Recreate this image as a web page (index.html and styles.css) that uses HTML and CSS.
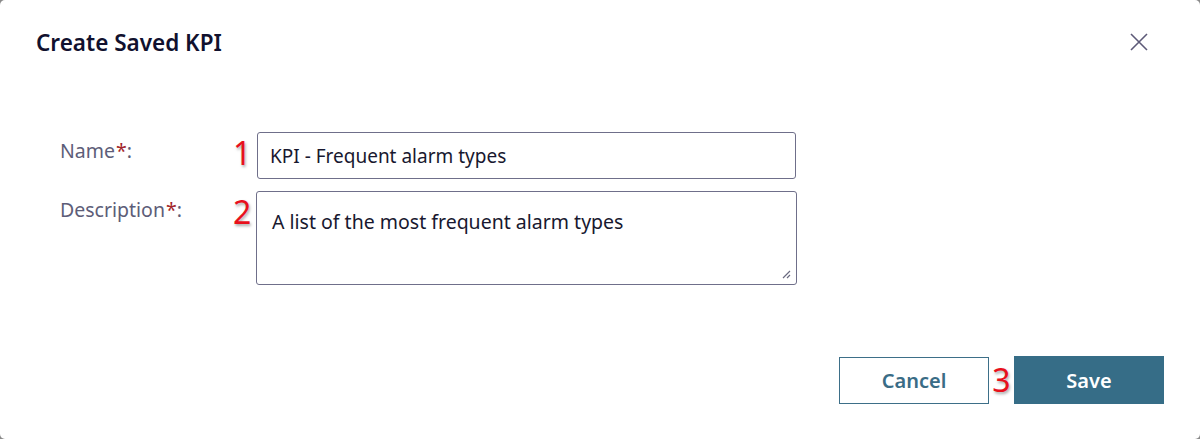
FILE: index.html
```html
<!DOCTYPE html>
<html lang="en">
<head>
<meta charset="utf-8">
<title>Create Saved KPI</title>
<link rel="stylesheet" href="styles.css">
</head>
<body>
<div class="dialog">
  <header class="dialog-header">
    <h1 class="dialog-title">Create Saved KPI</h1>
    <button class="close-btn" aria-label="Close">
      <svg width="20" height="20" viewBox="0 0 20 20"><path d="M2 2 L18 18 M18 2 L2 18" stroke="#5d5a78" stroke-width="1.6" fill="none"/></svg>
    </button>
  </header>
  <form class="form">
    <div class="row">
      <label class="label">Name<span class="req">*</span>:</label>
      <span class="marker">1</span>
      <div class="field input">KPI - Frequent alarm types</div>
    </div>
    <div class="row">
      <label class="label">Description<span class="req">*</span>:</label>
      <span class="marker">2</span>
      <div class="field textarea">A list of the most frequent alarm types
        <svg class="grip" width="10" height="10" viewBox="0 0 10 10"><path d="M9 2 L2 9 M9 6 L6 9" stroke="#6a6a80" stroke-width="1.2" fill="none"/></svg>
      </div>
    </div>
  </form>
  <footer class="actions">
    <button class="btn btn-cancel">Cancel</button>
    <span class="marker marker-btn">3</span>
    <button class="btn btn-save">Save</button>
  </footer>
</div>
</body>
</html>
```
FILE: styles.css
```css
html { background: #8a8a8a; }
body {
  margin: 0;
  font-family: "Noto Sans", "Segoe UI", sans-serif;
}
.dialog {
  width: 1200px;
  height: 439px;
  background: #fff;
  border-radius: 5px;
  box-sizing: border-box;
  padding: 26px 36px 0 36px;
  display: flex;
  flex-direction: column;
}
.dialog-header {
  display: flex;
  justify-content: space-between;
  align-items: center;
  height: 32px;
}
.dialog-title {
  margin: 0;
  font-size: 22.5px;
  font-weight: 600;
  color: #11112e;
}
.close-btn {
  border: 0;
  background: none;
  padding: 0;
  margin-right: 15px;
  width: 20px;
  height: 20px;
  display: flex;
}
.form {
  margin-top: 74px;
  display: flex;
  flex-direction: column;
  gap: 12px;
  padding-left: 24px;
}
.row {
  display: flex;
  align-items: flex-start;
}
.label {
  width: 173px;
  font-size: 19.5px;
  color: #5d5d78;
  padding-top: 6px;
  line-height: 26px;
}
.req { color: #a3262a; margin-left: 1px; }
.marker {
  color: #e8101c;
  font-size: 32px;
  line-height: 32px;
  width: 24px;
  text-shadow: 1px 2px 3px rgba(0,0,0,0.35);
  padding-top: 5px;
}
.field {
  box-sizing: border-box;
  border: 1px solid #6f6f8a;
  border-radius: 3px;
  font-size: 19.5px;
  color: #18182f;
  line-height: 26px;
}
.input {
  width: 539px;
  height: 47px;
  padding: 10px 12px;
  font-size: 19px;
}
.textarea {
  width: 541px;
  height: 94px;
  margin-left: -1px;
  padding: 17px 15px;
  position: relative;
}
.grip {
  position: absolute;
  right: 5px;
  bottom: 5px;
}
.actions {
  margin-top: auto;
  margin-bottom: 35px;
  display: flex;
  justify-content: flex-end;
  align-items: center;
}
.btn {
  font-family: inherit;
  font-size: 20px;
  font-weight: 600;
  cursor: pointer;
}
.btn-cancel {
  width: 150px;
  height: 47px;
  background: #fff;
  border: 1px solid #3d6f88;
  color: #3a6c86;
}
.btn-save {
  width: 150px;
  height: 48px;
  background: #366d87;
  border: 0;
  color: #fff;
}
.marker-btn {
  padding-top: 0;
  width: 25px;
  text-align: center;
}
```
